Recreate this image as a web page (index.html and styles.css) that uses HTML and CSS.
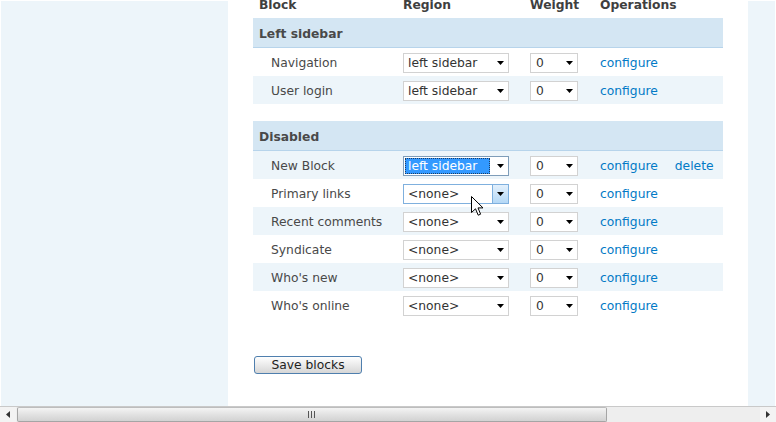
FILE: index.html
```html
<!DOCTYPE html>
<html>
<head>
<meta charset="utf-8">
<link rel="stylesheet" href="styles.css">
</head>
<body>
<div class="page">
  <aside class="sidebar"></aside>
  <main class="content">
    <div class="blocks">
      <div class="row head"><div>Block</div><div>Region</div><div>Weight</div><div>Operations</div></div>

      <div class="row region"><div class="rtitle">Left sidebar</div></div>
      <div class="row odd">
        <div class="name">Navigation</div>
        <div><div class="sel wide"><span class="val">left sidebar</span><svg class="arr" width="7" height="4" viewBox="0 0 7 4"><path d="M0 0h7L3.5 4z"/></svg></div></div>
        <div><div class="sel narrow"><span class="val">0</span><svg class="arr" width="7" height="4" viewBox="0 0 7 4"><path d="M0 0h7L3.5 4z"/></svg></div></div>
        <div class="ops"><a href="#">configure</a></div>
      </div>
      <div class="row even">
        <div class="name">User login</div>
        <div><div class="sel wide"><span class="val">left sidebar</span><svg class="arr" width="7" height="4" viewBox="0 0 7 4"><path d="M0 0h7L3.5 4z"/></svg></div></div>
        <div><div class="sel narrow"><span class="val">0</span><svg class="arr" width="7" height="4" viewBox="0 0 7 4"><path d="M0 0h7L3.5 4z"/></svg></div></div>
        <div class="ops"><a href="#">configure</a></div>
      </div>

      <div class="spacer"></div>

      <div class="row region"><div class="rtitle">Disabled</div></div>
      <div class="row even">
        <div class="name">New Block</div>
        <div><div class="sel wide focus"><span class="val hl">left sidebar</span><svg class="arr" width="7" height="4" viewBox="0 0 7 4"><path d="M0 0h7L3.5 4z"/></svg></div></div>
        <div><div class="sel narrow"><span class="val">0</span><svg class="arr" width="7" height="4" viewBox="0 0 7 4"><path d="M0 0h7L3.5 4z"/></svg></div></div>
        <div class="ops"><a href="#">configure</a><a href="#">delete</a></div>
      </div>
      <div class="row odd">
        <div class="name">Primary links</div>
        <div><div class="sel wide hover"><span class="val">&lt;none&gt;</span><span class="btn"><svg class="arr" width="7" height="4" viewBox="0 0 7 4"><path d="M0 0h7L3.5 4z"/></svg></span></div></div>
        <div><div class="sel narrow"><span class="val">0</span><svg class="arr" width="7" height="4" viewBox="0 0 7 4"><path d="M0 0h7L3.5 4z"/></svg></div></div>
        <div class="ops"><a href="#">configure</a></div>
      </div>
      <div class="row even">
        <div class="name">Recent comments</div>
        <div><div class="sel wide"><span class="val">&lt;none&gt;</span><svg class="arr" width="7" height="4" viewBox="0 0 7 4"><path d="M0 0h7L3.5 4z"/></svg></div></div>
        <div><div class="sel narrow"><span class="val">0</span><svg class="arr" width="7" height="4" viewBox="0 0 7 4"><path d="M0 0h7L3.5 4z"/></svg></div></div>
        <div class="ops"><a href="#">configure</a></div>
      </div>
      <div class="row odd">
        <div class="name">Syndicate</div>
        <div><div class="sel wide"><span class="val">&lt;none&gt;</span><svg class="arr" width="7" height="4" viewBox="0 0 7 4"><path d="M0 0h7L3.5 4z"/></svg></div></div>
        <div><div class="sel narrow"><span class="val">0</span><svg class="arr" width="7" height="4" viewBox="0 0 7 4"><path d="M0 0h7L3.5 4z"/></svg></div></div>
        <div class="ops"><a href="#">configure</a></div>
      </div>
      <div class="row even">
        <div class="name">Who's new</div>
        <div><div class="sel wide"><span class="val">&lt;none&gt;</span><svg class="arr" width="7" height="4" viewBox="0 0 7 4"><path d="M0 0h7L3.5 4z"/></svg></div></div>
        <div><div class="sel narrow"><span class="val">0</span><svg class="arr" width="7" height="4" viewBox="0 0 7 4"><path d="M0 0h7L3.5 4z"/></svg></div></div>
        <div class="ops"><a href="#">configure</a></div>
      </div>
      <div class="row odd">
        <div class="name">Who's online</div>
        <div><div class="sel wide"><span class="val">&lt;none&gt;</span><svg class="arr" width="7" height="4" viewBox="0 0 7 4"><path d="M0 0h7L3.5 4z"/></svg></div></div>
        <div><div class="sel narrow"><span class="val">0</span><svg class="arr" width="7" height="4" viewBox="0 0 7 4"><path d="M0 0h7L3.5 4z"/></svg></div></div>
        <div class="ops"><a href="#">configure</a></div>
      </div>
    </div>

    <button class="save" type="button">Save blocks</button>

    <svg class="cursor" width="13" height="21" viewBox="0 0 13 21"><path d="M0.5 0.5V16.5L4.5 12.8L7.2 19.2L9.6 18.2L7 11.9H12Z" fill="#fff" stroke="#000" stroke-width="1" stroke-linejoin="miter"/></svg>
  </main>
  <aside class="right"></aside>
</div>
<div class="hscroll">
  <div class="sbtn"><svg width="4" height="7" viewBox="0 0 4 7"><path d="M4 0v7L0 3.5z" fill="#333"/></svg></div>
  <div class="thumb"><span class="grip"><i></i><i></i><i></i></span></div>
  <div class="track"></div>
  <div class="sbtn"><svg width="4" height="7" viewBox="0 0 4 7"><path d="M0 0v7L4 3.5z" fill="#333"/></svg></div>
</div>
</body>
</html>
```

FILE: styles.css
```css
* { box-sizing: border-box; }
html, body { margin: 0; padding: 0; background: #fff; overflow: hidden; }
body {
  width: 776px;
  height: 422px;
  font-family: "DejaVu Sans", Verdana, sans-serif;
  font-size: 12.3px;
  color: #494949;
}
.page {
  display: flex;
  height: 406px;
  padding: 0 1px;
  overflow: hidden;
}
.sidebar { width: 227px; margin-top: 1px; background: #edf5fa; }
.right { width: 27px; margin-top: 1px; background: #edf5fa; }
.content {
  width: 520px;
  position: relative;
  padding-left: 25px;
}
.blocks { width: 470px; }
.row {
  display: grid;
  grid-template-columns: 144px 127px 70px 1fr;
  align-items: center;
  height: 28px;
  padding-top: 1px;
}
.row > div { padding-left: 6px; }
.row > .name { padding-left: 18px; }
.head {
  height: 18px;
  padding-top: 0;
  align-items: start;
  font-weight: bold;
  line-height: 10px;
  color: #3f3f3f;
}
.region {
  height: 30px;
  padding-top: 2px;
  background: #d4e6f3;
  border-bottom: 1px solid #b7d4eb;
  font-weight: bold;
}
.region .rtitle { grid-column: 1 / -1; }
.even { background: #edf5fa; }
.odd { background: #fff; }
.spacer { height: 17px; }

.sel {
  height: 20px;
  border: 1px solid #d2d2d2;
  background: #fff;
  display: flex;
  align-items: center;
  justify-content: space-between;
  padding: 0 4px 0 4px;
  color: #333;
}
.sel.wide { width: 106px; }
.sel.narrow { width: 48px; padding-left: 5px; }
.sel .arr { display: block; flex: none; }
.sel .arr path { fill: #000; }
.sel.focus { border-color: #7f9db9; padding-left: 1px; }
.sel .hl {
  background: #3399ff;
  color: #fff;
  width: 85px;
  height: 16px;
  line-height: 16px;
  padding-left: 3px;
  outline: 1px dotted #1b3d63;
  outline-offset: -1px;
}
.sel.hover { border-color: #7fb0de; padding-right: 0; }
.sel .btn {
  width: 16px;
  height: 18px;
  border-left: 1px solid #7fb0de;
  background: linear-gradient(#e3f0fc, #b4d8f6);
  display: flex;
  align-items: center;
  justify-content: center;
}

.ops { display: flex; gap: 17px; }
.ops a { color: #027ac6; text-decoration: none; }

.save {
  display: block;
  margin: 37px 0 0 1px;
  width: 108px;
  height: 18px;
  padding: 0;
  border: 1px solid #4f7fae;
  border-radius: 3px;
  background: linear-gradient(#fefefe, #e6e6e6 60%, #d6d6d6);
  font-family: "DejaVu Sans", Verdana, sans-serif;
  font-size: 12.3px;
  line-height: 15px;
  color: #222;
}

.cursor { position: absolute; left: 243px; top: 196px; }

.hscroll {
  display: flex;
  height: 16px;
  border-top: 1px solid #c9c9c9;
  background: #efefef;
}
.sbtn {
  width: 16px;
  display: flex;
  align-items: center;
  justify-content: center;
  background: #f3f3f3;
}
.thumb {
  width: 590px;
  margin-left: 1px;
  border: 1px solid #a5a5a5;
  border-top-color: #bdbdbd;
  border-radius: 2px;
  background: linear-gradient(#f4f4f4, #e2e2e2 50%, #d2d2d2);
  display: flex;
  align-items: center;
  justify-content: center;
}
.grip { display: flex; gap: 2px; margin-left: -2px; }
.grip i { display: block; width: 1px; height: 7px; background: #555; }
.track { flex: 1; background: #eeeeee; }
```
